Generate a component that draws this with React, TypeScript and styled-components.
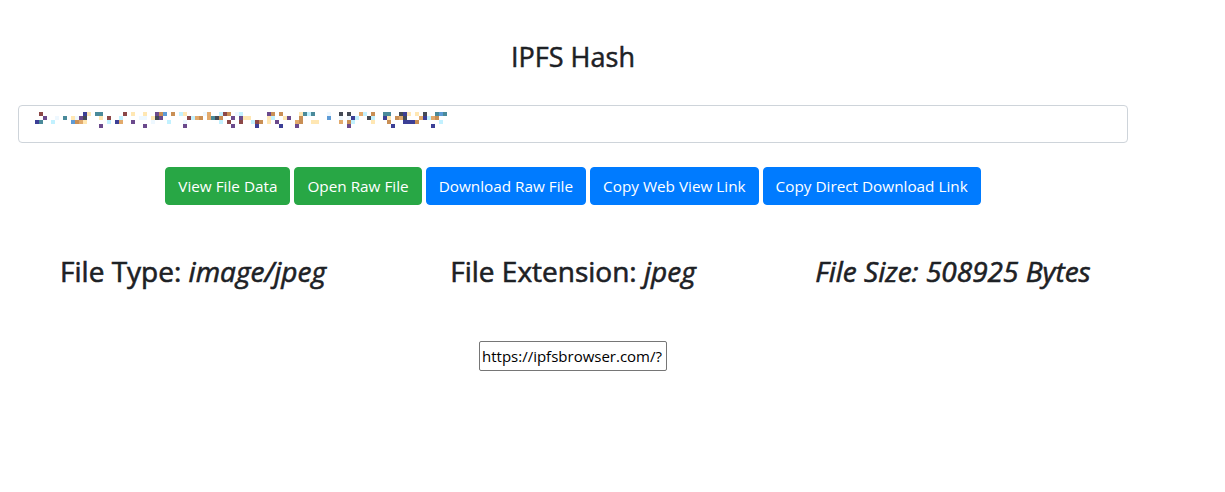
import React from "react";
import styled, { createGlobalStyle } from "styled-components";

const GlobalStyle = createGlobalStyle`
  body {
    margin: 0;
    background: #fff;
    color: #212529;
    font-family: "Open Sans", "Noto Sans", "Liberation Sans", sans-serif;
    font-size: 16px;
    line-height: 1.5;
  }
`;

const Container = styled.div`
  width: 1110px;
  margin-left: 18px;
  padding-top: 40px;
`;

const Title = styled.h3`
  margin: 0 0 31px;
  text-align: center;
  font-size: 27px;
  font-weight: 500;
  line-height: 1.25;
  color: #1d2125;
  -webkit-text-stroke: 0.5px #1d2125;
`;

const HashField = styled.div`
  position: relative;
  height: 38px;
`;

const HashInput = styled.input`
  display: block;
  width: 100%;
  height: 38px;
  box-sizing: border-box;
  padding: 6px 12px;
  border: 1px solid #ced4da;
  border-radius: 4px;
  font: inherit;
  color: #495057;
  background: #fff;
`;

// the blurred-out hash, drawn as a mosaic
const Mosaic = styled.svg`
  position: absolute;
  left: 17px;
  top: 7px;
  pointer-events: none;
`;

const ButtonRow = styled.div`
  display: flex;
  justify-content: center;
  gap: 4px;
  margin-top: 24px;
`;

const Button = styled.button<{ $variant: "success" | "primary" }>`
  padding: 6px 12px;
  border: 1px solid ${(p) => (p.$variant === "success" ? "#28a745" : "#007bff")};
  border-radius: 4px;
  background: ${(p) => (p.$variant === "success" ? "#28a745" : "#007bff")};
  color: #fff;
  font-family: inherit;
  font-size: 15.3px;
  line-height: 24px;
  cursor: pointer;
`;

const StatsRow = styled.div`
  display: grid;
  grid-template-columns: repeat(3, 1fr);
  margin: 47px -15px 0;
`;

const Stat = styled.h2`
  margin: 0;
  text-align: center;
  font-size: 28px;
  font-weight: 500;
  line-height: 38px;
  color: #1d2125;
  -webkit-text-stroke: 0.6px #1d2125;
`;

const LinkRow = styled.div`
  display: flex;
  justify-content: center;
  margin-top: 51px;
`;

const LinkInput = styled.input`
  width: 188px;
  height: 30px;
  box-sizing: border-box;
  padding: 1px 2px;
  border: 1px solid #767676;
  border-radius: 2px;
  font-family: inherit;
  font-size: 15px;
  color: #000;
`;

const palette = [
  "#3c3f96",
  "#6b4a8c",
  "#c98f55",
  "#ffe7b3",
  "#c2f1ff",
  "#5d9bd6",
  "#444a55",
  "#8c4848",
  "#eef8ff",
  "#e2aa6c",
  "#4a8a9a",
];

const buildMosaic = () => {
  const cells: { x: number; y: number; c: string }[] = [];
  let seed = 17;
  const rnd = () => {
    seed = (seed * 1103515245 + 12345) % 2147483648;
    return seed / 2147483648;
  };
  for (let col = 0; col < 103; col++) {
    const gap = col % 9 === 8 || col === 3;
    for (let row = 0; row < 3; row++) {
      if (gap && row !== 1) continue;
      if (rnd() < 0.45) {
        cells.push({ x: col * 4, y: row * 4, c: palette[Math.floor(rnd() * palette.length)] });
      }
    }
    if (rnd() < 0.06) cells.push({ x: col * 4, y: 12, c: palette[Math.floor(rnd() * 2)] });
  }
  return cells;
};

const mosaic = buildMosaic();

export default function App() {
  return (
    <>
      <GlobalStyle />
      <Container>
        <Title>IPFS Hash</Title>
        <HashField>
          <HashInput type="text" aria-label="IPFS hash" readOnly />
          <Mosaic width="412" height="20" viewBox="0 0 412 20">
            {mosaic.map((m, i) => (
              <rect key={i} x={m.x} y={m.y} width="4" height="4" fill={m.c} />
            ))}
          </Mosaic>
        </HashField>
        <ButtonRow>
          <Button $variant="success">View File Data</Button>
          <Button $variant="success">Open Raw File</Button>
          <Button $variant="primary">Download Raw File</Button>
          <Button $variant="primary">Copy Web View Link</Button>
          <Button $variant="primary">Copy Direct Download Link</Button>
        </ButtonRow>
        <StatsRow>
          <Stat>
            File Type: <i>image/jpeg</i>
          </Stat>
          <Stat>
            File Extension: <i>jpeg</i>
          </Stat>
          <Stat>
            <i>File Size: 508925 Bytes</i>
          </Stat>
        </StatsRow>
        <LinkRow>
          <LinkInput type="text" defaultValue="https://ipfsbrowser.com/?" />
        </LinkRow>
      </Container>
    </>
  );
}
